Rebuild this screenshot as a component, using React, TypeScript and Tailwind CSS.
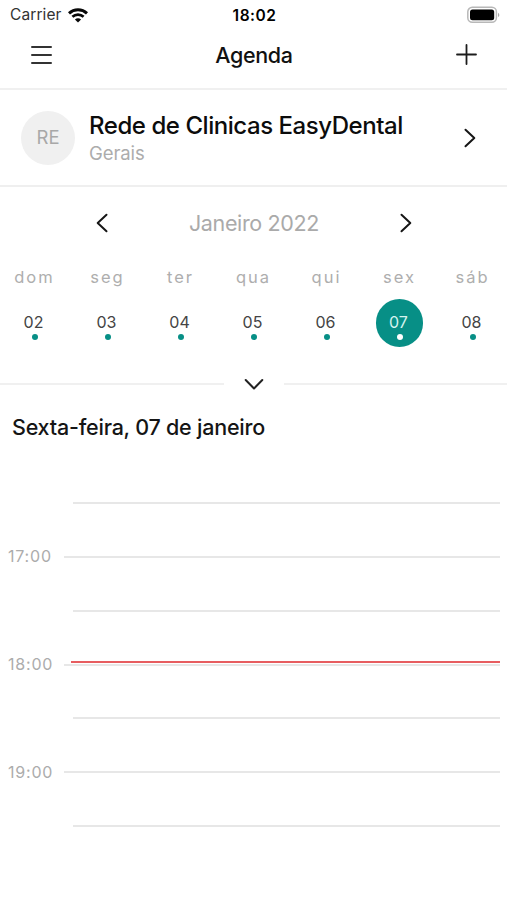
import React from "react";

const days = [
  { name: "dom", number: "02" },
  { name: "seg", number: "03" },
  { name: "ter", number: "04" },
  { name: "qua", number: "05" },
  { name: "qui", number: "06" },
  { name: "sex", number: "07", selected: true },
  { name: "sáb", number: "08" },
];

const slots = [
  { id: "16:30" },
  { id: "17:00", label: "17:00" },
  { id: "17:30" },
  { id: "18:00", label: "18:00", current: true },
  { id: "18:30" },
  { id: "19:00", label: "19:00" },
  { id: "19:30" },
];

function Chevron({ className = "" }: { className?: string }) {
  return (
    <svg viewBox="0 0 12 20" className={`h-5 w-3 ${className}`} fill="none" stroke="#161616" strokeWidth="2" strokeLinecap="round" strokeLinejoin="round">
      <path d="M1.5 1.7 10.3 10 1.5 18.3" />
    </svg>
  );
}

function StatusBar() {
  return (
    <div className="grid h-[30px] grid-cols-3 items-center pl-[10px] pr-[7px]">
      <div className="flex items-center gap-[6px]">
        <span className="text-[15.5px] leading-5 tracking-[0.1px] text-[#333]">Carrier</span>
        <svg viewBox="0 0 20 15" className="h-[15px] w-5" fill="none" stroke="#080808" strokeWidth="3">
          <path d="M1 5.3C6 .7 14 .7 19 5.3" />
          <path d="M4.4 8.8c3.2-2.9 8-2.9 11.2 0" strokeWidth="2.7" />
          <path d="M10 14.6 6.9 11.5c1.7-1.6 4.5-1.6 6.2 0Z" fill="#080808" stroke="none" />
        </svg>
      </div>
      <span className="-ml-px pt-px text-center text-[15.5px] font-semibold leading-5 tracking-[0.5px] text-black">18:02</span>
      <svg viewBox="0 0 34 18" className="-mt-px h-[18px] w-[34px] justify-self-end">
        <rect x="1.8" y="1.3" width="28.6" height="15" rx="4.5" fill="#fff" stroke="#b8b8b8" strokeWidth="1.5" />
        <rect x="4" y="3.6" width="24.2" height="10.6" rx="2.5" fill="#000" />
        <path d="M32 6.7c1.8.7 1.8 3.7 0 4.4Z" fill="#a8a8a8" />
      </svg>
    </div>
  );
}

export default function App() {
  return (
    <div className="h-[900px] w-[507px] overflow-hidden bg-white font-['Inter','Liberation_Sans',sans-serif]">
      <StatusBar />

      <header className="flex h-[60px] items-center justify-between border-b-2 border-[#f0f0f0] pb-[9px] pl-[31px] pr-[30px]">
        <div className="flex w-[21px] flex-col gap-[6px]">
          <span className="h-[2px] rounded-full bg-[#333]" />
          <span className="h-[2px] rounded-full bg-[#333]" />
          <span className="h-[2px] rounded-full bg-[#333]" />
        </div>
        <h1 className="text-[21.5px] font-medium leading-7 tracking-[-0.35px] text-[#111]">Agenda</h1>
        <svg viewBox="0 0 21 21" className="size-[21px]" stroke="#1c1c1c" strokeWidth="1.8" strokeLinecap="round">
          <path d="M10.5 1v19M1 10.5h19" />
        </svg>
      </header>

      <section className="flex h-[97px] items-center border-b-2 border-[#efefef] pl-[21px] pr-[31px]">
        <div className="flex size-[54px] items-center justify-center rounded-full bg-[#f0f0f0] text-[18.5px] text-[#a8a8a8]">RE</div>
        <div className="ml-[14px] flex grow flex-col pt-[2px]">
          <span className="whitespace-nowrap text-[24px] font-medium leading-[29px] tracking-[-0.45px] text-[#0c0c0c]">Rede de Clinicas EasyDental</span>
          <span className="text-[18.5px] leading-[26px] tracking-[-0.1px] text-[#acacac]">Gerais</span>
        </div>
        <Chevron />
      </section>

      <div className="flex h-[72px] items-center justify-between pl-[96px] pr-[95px]">
        <Chevron className="rotate-180" />
        <span className="text-[21.5px] leading-7 tracking-[-0.35px] text-[#aaa]">Janeiro 2022</span>
        <Chevron />
      </div>

      <div className="-mx-[2px] grid h-[108px] grid-cols-7">
        {days.map((day) => (
          <div key={day.name} className="flex flex-col items-center">
            <span className="mt-[7px] text-[16.5px] leading-[22px] tracking-[2px] text-[#aeaeae]">{day.name}</span>
            <div className={`mt-[11px] flex size-[47.5px] flex-col items-center rounded-full pt-[13px] ${day.selected ? "bg-[#078f86]" : ""}`}>
              <span className={`mr-[2px] text-[16px] leading-[21.5px] ${day.selected ? "text-[#d5f3ef]" : "text-[#444]"}`}>{day.number}</span>
              <span className={`size-[6px] rounded-full ${day.selected ? "bg-white" : "bg-[#078f86]"}`} />
            </div>
          </div>
        ))}
      </div>

      <div className="flex h-[34px] items-center">
        <span className="h-[2px] w-[224px] bg-[#f0f0f0]" />
        <span className="flex w-[60px] justify-center">
          <svg viewBox="0 0 20 12" className="h-3 w-5" fill="none" stroke="#222" strokeWidth="2" strokeLinecap="round" strokeLinejoin="round">
            <path d="M1.7 2 10 10.5 18.3 2" />
          </svg>
        </span>
        <span className="h-[2px] grow bg-[#f0f0f0]" />
      </div>

      <h2 className="h-[74.9px] whitespace-nowrap pl-3 pt-[11px] text-[21.5px] font-medium leading-[30px] tracking-[-0.22px] text-[#151515]">Sexta-feira, 07 de janeiro</h2>

      <div className="pr-[7px]">
        {slots.map((slot) => (
          <div key={slot.id} className="relative flex h-[53.9px] items-center">
            <span className={`-mt-px shrink-0 pl-2 text-[16px] leading-5 tracking-[0.8px] text-[#acacac] ${slot.label ? "w-16" : "w-[72.5px]"}`}>{slot.label}</span>
            <span className="h-[2px] grow bg-[#e7e7e7]" />
            {slot.current && <span className="absolute left-[71px] right-0 top-[23.3px] h-[2px] bg-[#e75d60]" />}
          </div>
        ))}
      </div>
    </div>
  );
}
